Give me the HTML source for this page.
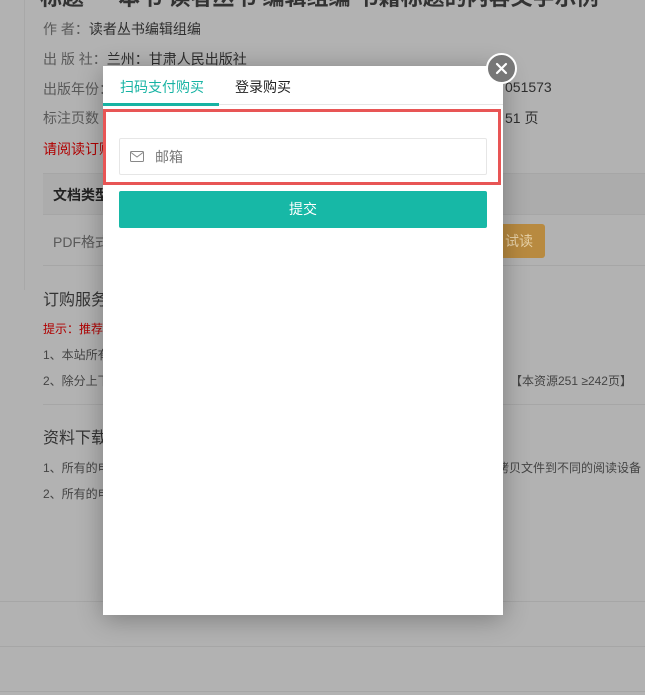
<!DOCTYPE html>
<html><head><meta charset="utf-8"><style>
*{margin:0;padding:0;box-sizing:border-box}
body{width:645px;height:695px;overflow:hidden;background:#b2b2b2;font-family:"Liberation Sans","Noto Sans CJK SC",sans-serif;position:relative;color:#2a2a2a}
.a{position:absolute;white-space:nowrap}
.t{font-size:14px;color:#2e2e2e}
.g{color:#595959}
.hl{position:absolute;height:1px;background:#a6a6a6}
#modal{position:absolute;left:103px;top:66px;width:400px;height:549px;background:#fff;box-shadow:0 4px 24px rgba(0,0,0,.3)}
</style></head><body>
<div class="a" style="left:24px;top:0;width:1px;height:290px;background:#a8a8a8"></div>
<div class="a" style="left:40px;top:-20px;font-size:22px;font-weight:bold;color:#333">标题 — 本书 读者丛书 编辑组编 书籍标题的内容文字示例</div>
<div class="a t" style="left:43px;top:19px"><span class="g">作 者：</span>读者丛书编辑组编</div>
<div class="a t" style="left:43px;top:49px"><span class="g">出 版 社：</span>兰州：甘肃人民出版社</div>
<div class="a t" style="left:43px;top:79px"><span class="g">出版年份：</span></div>
<div class="a t" style="left:505px;top:79px">051573</div>
<div class="a t" style="left:43px;top:108px"><span class="g">标注页数</span></div>
<div class="a t" style="left:505px;top:108px">51 页</div>
<div class="a" style="left:43px;top:139px;font-size:14px;color:#b00000">请阅读订购</div>
<div class="hl" style="left:43px;top:173px;width:602px"></div>
<div class="a" style="left:43px;top:174px;width:602px;height:40px;background:#acacac"></div>
<div class="a" style="left:53px;top:185px;font-size:14px;font-weight:bold;color:#222">文档类型</div>
<div class="hl" style="left:43px;top:214px;width:602px"></div>
<div class="a t g" style="left:53px;top:232px">PDF格式</div>
<div class="a" style="left:490px;top:224px;width:55px;height:34px;background:#b88a40;border-radius:3px;color:#e8d2a8;font-size:14px;line-height:34px;text-align:right;padding-right:12px">试读</div>
<div class="hl" style="left:43px;top:265px;width:602px"></div>
<div class="a" style="left:43px;top:286px;font-size:16px;color:#333">订购服务</div>
<div class="a" style="left:43px;top:320px;font-size:12px;color:#b00000">提示：推荐</div>
<div class="a" style="left:43px;top:346px;font-size:12px;color:#444">1、本站所有</div>
<div class="a" style="left:43px;top:372px;font-size:12px;color:#444">2、除分上下</div>
<div class="a" style="left:510px;top:372px;font-size:12px;color:#444">【本资源251 ≥242页】</div>
<div class="hl" style="left:43px;top:404px;width:602px"></div>
<div class="a" style="left:43px;top:424px;font-size:16px;color:#333">资料下载</div>
<div class="a" style="left:43px;top:459px;font-size:12px;color:#444">1、所有的电</div>
<div class="a" style="left:497px;top:459px;font-size:12px;color:#444">拷贝文件到不同的阅读设备</div>
<div class="a" style="left:43px;top:485px;font-size:12px;color:#444">2、所有的电</div>
<div class="hl" style="left:0;top:601px;width:645px"></div>
<div class="hl" style="left:0;top:646px;width:645px"></div>
<div class="hl" style="left:0;top:691px;width:645px"></div>

<div id="modal">
  <div class="a" style="left:17px;top:11px;font-size:14px;color:#17b3a3">扫码支付购买</div>
  <div class="a" style="left:132px;top:11px;font-size:14px;color:#222">登录购买</div>
  <div class="a" style="left:0;top:38px;width:400px;height:1px;background:#e6e6e6"></div>
  <div class="a" style="left:0;top:37px;width:116px;height:3px;background:#17b3a3"></div>
  <div class="a" style="left:0;top:43px;width:398px;height:76px;border:3px solid #e85555"></div>
  <div class="a" style="left:16px;top:72px;width:368px;height:37px;border:1px solid #e6e6e6;border-radius:2px"></div>
  <svg class="a" style="left:27px;top:85px" width="14" height="11" viewBox="0 0 14 11"><rect x="0.5" y="0.5" width="13" height="10" rx="1" fill="none" stroke="#888"/><path d="M1 1.5 L7 6 L13 1.5" fill="none" stroke="#888"/></svg>
  <div class="a" style="left:52px;top:81px;font-size:14px;color:#777">邮箱</div>
  <div class="a" style="left:16px;top:125px;width:368px;height:37px;background:#17b8a6;border-radius:2px;color:#fff;font-size:14px;line-height:37px;text-align:center">提交</div>
</div>
<div class="a" style="left:486px;top:53px;width:31px;height:31px;border-radius:50%;background:#777;border:2.5px solid #fff"></div>
<svg class="a" style="left:493px;top:60px" width="17" height="17" viewBox="0 0 17 17"><path d="M4 4 L13 13 M13 4 L4 13" stroke="#fff" stroke-width="2.2" stroke-linecap="round"/></svg>
</body></html>
